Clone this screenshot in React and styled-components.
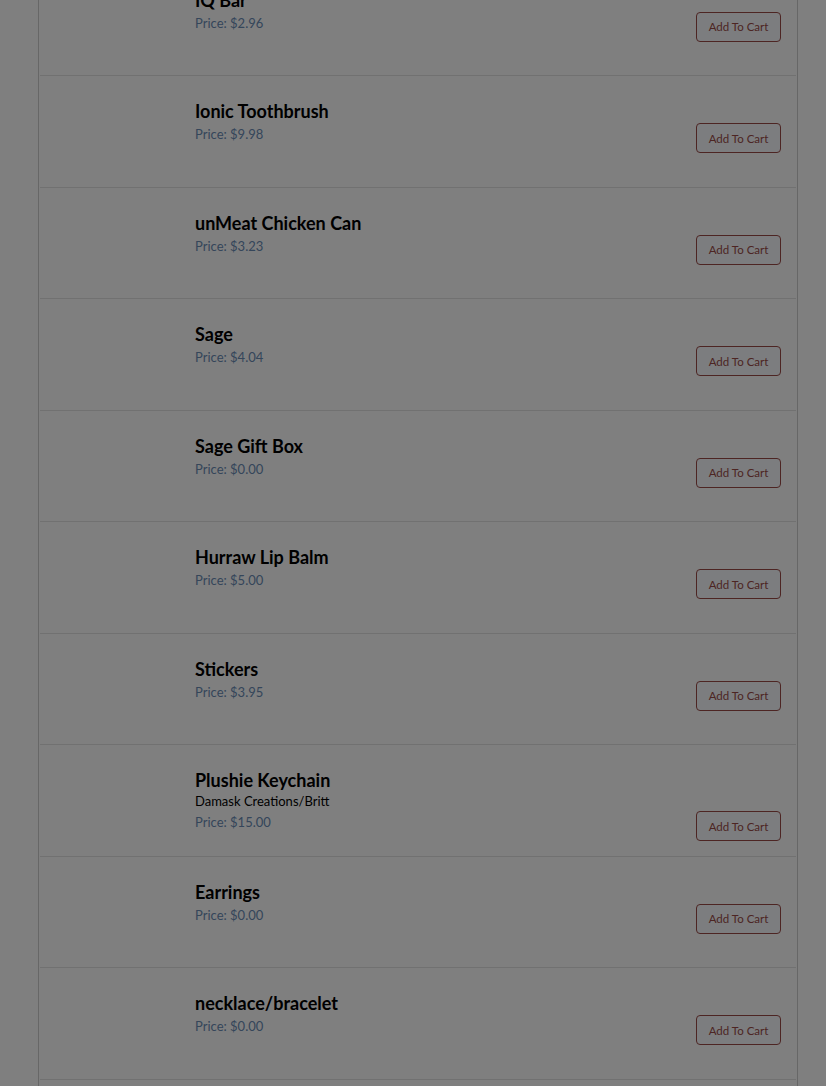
import React from "react";
import styled, { createGlobalStyle } from "styled-components";

const Global = createGlobalStyle`
  html, body { margin: 0; padding: 0; background: #ffffff; overflow: hidden; }
  body { font-family: "Lato", "Open Sans", "Liberation Sans", sans-serif; color: #000; }
  * { box-sizing: border-box; }
`;

const Page = styled.div`
  height: 1086px;
  overflow: hidden;
`;

const Card = styled.div`
  margin-top: -35.5px;
  margin-left: 38px;
  width: 760px;
  border: 1px solid #cfcfcf;
  border-top: none;
  padding: 0 1px 24px;
  background: #ffffff;
`;

const Row = styled.div`
  display: flex;
  height: 111.56px;
  border-bottom: 1px solid #e2e2e2;
`;

const Thumb = styled.div`
  flex: 0 0 140px;
  margin-right: 15px;
`;

const Main = styled.div`
  flex: 1;
  display: flex;
  align-items: flex-end;
  justify-content: space-between;
  align-self: flex-start;
  padding-top: 24px;
  padding-right: 15px;
`;

const Info = styled.div`
  display: flex;
  flex-direction: column;
  margin-bottom: 9px;
`;

const Name = styled.div`
  font-size: 18px;
  line-height: 22px;
  font-weight: 700;
  margin-bottom: 2px;
`;

const Desc = styled.div`
  font-size: 13px;
  line-height: 16px;
  margin-bottom: 3px;
`;

const Price = styled.div`
  font-size: 13px;
  line-height: 20px;
  color: #6a8cb5;
`;

const CartButton = styled.button`
  width: 85px;
  height: 30px;
  padding: 0;
  border: 1px solid #9a4a46;
  border-radius: 4px;
  background: #f8fbff;
  color: #9a4a46;
  font-family: "Lato", "Open Sans", sans-serif;
  font-size: 11.5px;
  cursor: pointer;
`;

const Overlay = styled.div`
  position: fixed;
  inset: 0;
  background: rgba(0, 0, 0, 0.5);
`;

const items = [
  { name: "IQ Bar", price: "2.96" },
  { name: "Ionic Toothbrush", price: "9.98" },
  { name: "unMeat Chicken Can", price: "3.23" },
  { name: "Sage", price: "4.04" },
  { name: "Sage Gift Box", price: "0.00" },
  { name: "Hurraw Lip Balm", price: "5.00" },
  { name: "Stickers", price: "3.95" },
  { name: "Plushie Keychain", desc: "Damask Creations/Britt", price: "15.00" },
  { name: "Earrings", price: "0.00" },
  { name: "necklace/bracelet", price: "0.00" },
];

export default function App() {
  return (
    <Page>
      <Global />
      <Card>
        {items.map((it) => (
          <Row key={it.name}>
            <Thumb />
            <Main>
              <Info>
                <Name>{it.name}</Name>
                {it.desc && <Desc>{it.desc}</Desc>}
                <Price>Price: ${it.price}</Price>
              </Info>
              <CartButton>Add To Cart</CartButton>
            </Main>
          </Row>
        ))}
      </Card>
      <Overlay />
    </Page>
  );
}
